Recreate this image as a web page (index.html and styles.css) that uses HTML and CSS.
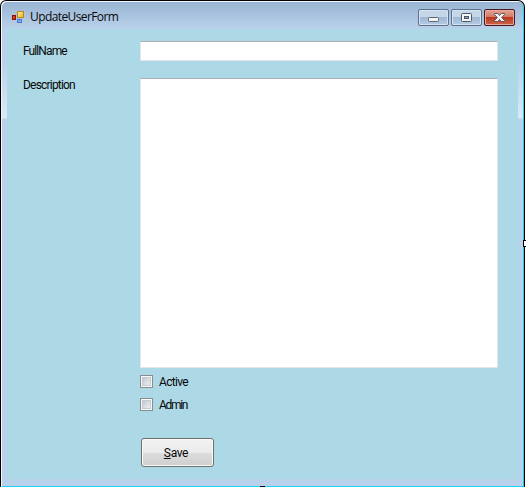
FILE: index.html
```html
<!DOCTYPE html>
<html lang="en">
<head>
<meta charset="utf-8">
<title>UpdateUserForm</title>
<link rel="stylesheet" href="styles.css">
</head>
<body>
<div class="window">
  <header class="titlebar">
    <svg class="app-icon" width="14" height="14" viewBox="0 0 14 14">
      <defs>
        <linearGradient id="gold" x1="0" y1="0" x2="1" y2="1"><stop offset="0" stop-color="#fff0a0"/><stop offset="1" stop-color="#f0b010"/></linearGradient>
      </defs>
      <rect x=".5" y=".5" width="12.5" height="12.5" fill="none" stroke="#c8c8cc" stroke-opacity=".6"/>
      <rect x="5.5" y=".5" width="6" height="6" fill="url(#gold)" stroke="#b48a20"/>
      <rect x=".5" y="4.5" width="3" height="4" fill="#d83a20" stroke="#8c1208"/>
      <rect x="5.5" y="8.5" width="4" height="3" fill="#7aa8f4" stroke="#4a78d0"/>
    </svg>
    <h1 class="title">UpdateUserForm</h1>
    <div class="controls">
      <button class="control" aria-label="Minimize"><svg width="29" height="15" viewBox="0 0 29 15"><rect x="9.500" y="7.500" width="10" height="4" rx="1" fill="#f4f4f4" stroke="#5b6472"/></svg></button>
      <button class="control" aria-label="Maximize"><svg width="29" height="15" viewBox="0 0 29 15"><rect x="9.500" y="3.500" width="10" height="8" rx="1" fill="#f4f4f4" stroke="#4c5566"/><rect x="12.500" y="6.500" width="4" height="2" fill="#8aa5c8" stroke="#4c5566"/></svg></button>
      <button class="control close" aria-label="Close"><svg width="29" height="15" viewBox="0 0 29 15"><path d="M9.500 3.500h3.200l1.800 2 1.800-2h3.200v1l-2.800 3 2.800 3v1h-3.200l-1.800-2-1.800 2H9.500v-1l2.800-3-2.800-3z" fill="#f6f6f6" stroke="#5c5462"/></svg></button>
    </div>
  </header>
  <form class="client">
    <label class="label name" for="fullname">FullName</label>
    <input class="field" id="fullname" type="text">
    <label class="label description" for="description">Description</label>
    <textarea class="field area" id="description"></textarea>
    <div class="options">
      <label class="option"><input class="check" type="checkbox"><span class="active">Active</span></label>
      <label class="option"><input class="check" type="checkbox"><span class="admin">Admin</span></label>
      <button class="save" type="button"><span><u>S</u>ave</span></button>
    </div>
  </form>
  <i class="handle right"></i>
  <i class="handle bottom"></i>
</div>
</body>
</html>
```
FILE: styles.css
```css
* { box-sizing: border-box; }
body {
  margin: 0;
  background: #fff;
  color: #080808;
  font: 12px/16px Roboto, "Open Sans", sans-serif;
  overflow: hidden;
}
.window {
  position: relative;
  width: 525px;
  height: 487px;
  padding: 0 5px 7px 5px;
  border: solid #000;
  border-width: 1px 1px 0 1px;
  border-radius: 6px 7px 0 0;
  background: linear-gradient(#98b4d2, #b9d1ea 28px, #b9d1ea 60px, #dce8f5 117px, #b9d1ea 118px);
  box-shadow: inset 1px 1px #f2f7fc, inset -1px -1px #1cd2ee;
}
.titlebar {
  display: flex;
  height: 28px;
  padding: 10px 4px 0 5px;
  align-items: flex-start;
}
.titlebar, .client { margin-left: 1px; }
.app-icon { display: block; }
.title {
  margin: -2px 0 0 4px;
  font: 400 12px/16px "Open Sans", sans-serif;
  letter-spacing: -.6px;
}
.controls { display: flex; gap: 2px; margin: -2px 0 0 auto; }
.control {
  width: 31px;
  height: 17px;
  padding: 0;
  border: 1px solid #5c718e;
  border-radius: 2px;
  background: linear-gradient(#c5d6e9 0 45%, #9db6d3 46%, #b5cce4);
  box-shadow: inset 0 0 0 1px #d5e2f0;
}
.control svg { display: block; }
.close {
  border-color: #4b1720;
  background: linear-gradient(#e2a394, #d37c68 45%, #b93520 46%, #cf6546);
  box-shadow: inset 0 0 0 1px #e5aa9d;
}
.client {
  display: grid;
  grid-template-columns: 117px 358px;
  grid-template-rows: 20px 290px auto;
  row-gap: 17px;
  width: 511px;
  height: 450px;
  padding: 12px 20px 0 16px;
  background: #add8e6;
}
.label { align-self: start; margin-top: 2px; }
.label.name { letter-spacing: -.9px; }
.label.description { letter-spacing: -.8px; margin-top: -1px; }
.field {
  width: 358px;
  height: 20px;
  margin: 0;
  border: 1px solid #e2e5ea;
  border-top-color: #abadb3;
  border-radius: 1px;
  background: #fff;
  resize: none;
}
.area { height: 290px; }
.options { grid-column: 2; margin-top: -11px; }
.option { display: flex; align-items: center; height: 16px; margin-bottom: 7px; }
.check {
  appearance: none;
  width: 13px;
  height: 13px;
  margin: -2px 6px 0 0;
  border: 1px solid #8a8d90;
  background: linear-gradient(135deg, #b8bfca, #f8f8f9);
  box-shadow: inset 0 0 0 1px #f8f8f8, inset 0 0 0 2px #c5cad1;
}
.active { letter-spacing: -.7px; }
.admin { letter-spacing: -1.3px; }
.save {
  display: block;
  width: 73px;
  height: 29px;
  margin: 25px 0 0 1px;
  padding: 0 3px 0 0;
  border: 1px solid #707070;
  border-radius: 3px;
  background: linear-gradient(#f2f2f2, #ebebeb 50%, #dddddd 51%, #cfcfcf);
  box-shadow: inset 0 0 0 1px #fafafa;
  color: #080808;
  font: inherit;
  letter-spacing: -.35px;
}
.save u { text-underline-offset: 1px; }
.handle { position: absolute; width: 5px; height: 7px; border: 1px solid #000; background: #fff; }
.right { left: 522px; top: 239px; }
.bottom { left: 259px; top: 485px; height: 1px; background: #000; }
```
